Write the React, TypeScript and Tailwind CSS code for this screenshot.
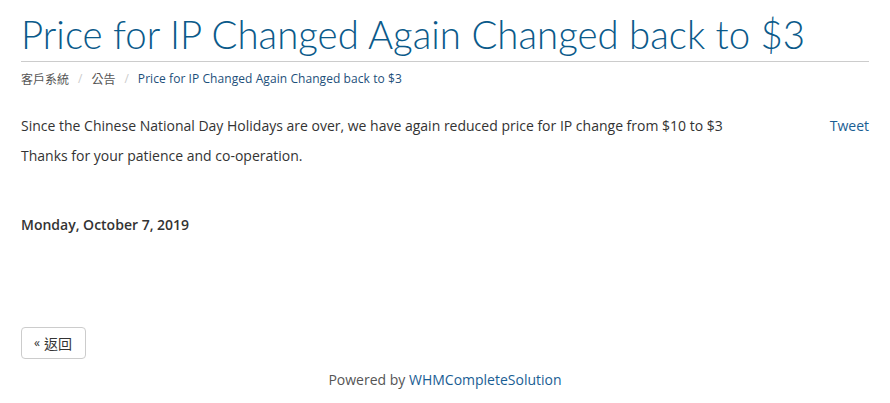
export default function App() {
  return (
    <div className="min-h-screen bg-white text-[#333] font-['Open_Sans',sans-serif] text-[14px] leading-[20px]">
      <div className="px-[21px] pt-[10px]">
        <h1 className="font-['Lato',sans-serif] font-light text-[38.4px] leading-[48px] text-[#0b5a8a] pb-[3px] border-b border-[#ccc]">
          Price for IP Changed Again Changed back to $3
        </h1>
        <nav className="flex items-center text-[12px] leading-[18px] mt-[8px] text-[#555]">
          <span className="font-['Noto_Sans_CJK_TC',sans-serif]">客戶系統</span>
          <span className="px-[9px] text-[#ccc]">/</span>
          <span className="font-['Noto_Sans_CJK_TC',sans-serif]">公告</span>
          <span className="px-[9px] text-[#ccc]">/</span>
          <span className="text-[#1d4f7a] tracking-[0.07px]">Price for IP Changed Again Changed back to $3</span>
        </nav>
        <div className="flex justify-between mt-[28px]">
          <div>
            <p className="mb-[10px]">
              Since the Chinese National Day Holidays are over, we have again reduced price for IP change from $10 to $3
            </p>
            <p className="mb-[10px]">Thanks for your patience and co-operation.</p>
          </div>
          <a className="text-[#1a5e94]">Tweet</a>
        </div>
        <p className="font-semibold mt-[39px]">Monday, October 7, 2019</p>
        <button className="mt-[92px] h-[32px] pl-[12px] pr-[13px] border border-[#ccc] rounded-[4px] bg-white text-[#333] text-[14px] flex items-center gap-[4px]">
          <span className="text-[12px]">«</span>
          <span className="font-['Noto_Sans_CJK_TC',sans-serif]">返回</span>
        </button>
        <p className="text-center mt-[11px] text-[#555]">
          Powered by <a className="text-[#1a5e94]">WHMCompleteSolution</a>
        </p>
      </div>
    </div>
  );
}
